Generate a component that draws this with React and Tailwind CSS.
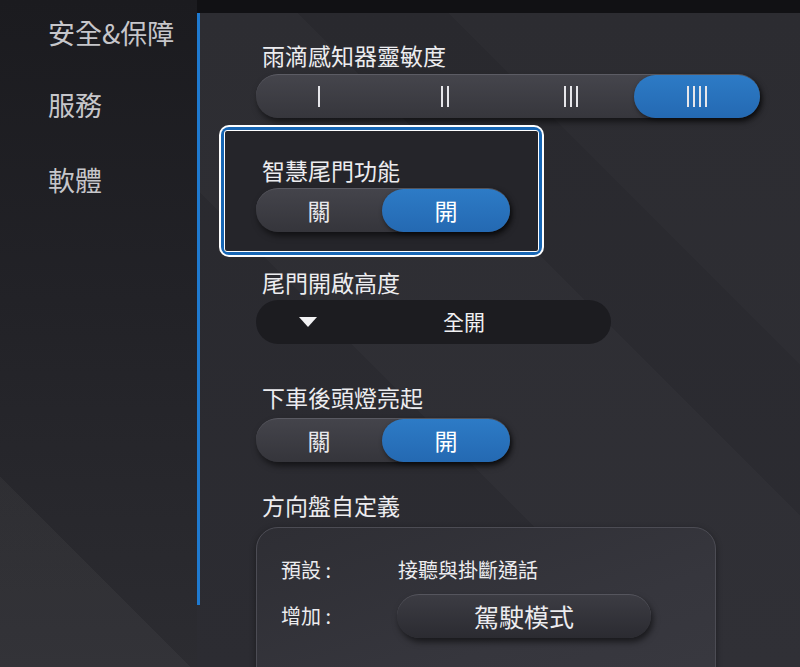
import React from "react";

const font = { fontFamily: '"Noto Sans CJK TC", "Noto Sans", sans-serif' };

function Bars({ n }) {
  return (
    <div className="flex gap-[4px] items-center">
      {Array.from({ length: n }).map((_, i) => (
        <span key={i} className="block w-[2px] h-[21px] bg-[#e6e6ea]" />
      ))}
    </div>
  );
}

function Label({ children, className = "" }) {
  return (
    <div className={"ml-[6px] h-[28px] leading-[28px] text-[23px] text-[#ececef] " + className}>
      {children}
    </div>
  );
}

function Toggle() {
  return (
    <div className="flex w-[254px] h-[44px] rounded-full bg-[linear-gradient(180deg,#44444b_0%,#35353b_100%)] border-t border-[#5a5a62] shadow-[2px_4px_6px_rgba(0,0,0,0.55)]">
      <div className="w-[126px] flex items-center justify-center text-[23px] text-[#e8e8ec]">關</div>
      <div className="flex-1 rounded-full flex items-center justify-center text-[23px] text-white bg-[linear-gradient(180deg,#2d7bc6_0%,#2469b2_100%)] shadow-[1px_2px_4px_rgba(0,0,0,0.5)]">開</div>
    </div>
  );
}

export default function App() {
  return (
    <div style={font} className="w-[800px] h-[667px] flex overflow-hidden bg-[#26262b]">
      {/* Sidebar */}
      <div className="w-[197px] h-full shrink-0 bg-[linear-gradient(45deg,rgba(255,255,255,0.035)_0%,rgba(255,255,255,0.035)_22%,transparent_22%),linear-gradient(180deg,#1b1b1f_0%,#222227_45%,#2c2c31_100%)] flex flex-col pl-[48px] pt-[16px]">
        <div className="h-[34px] leading-[34px] text-[27px] text-[#c6c6ca]">安全&amp;保障</div>
        <div className="h-[34px] leading-[34px] text-[27px] text-[#c6c6ca] mt-[38px]">服務</div>
        <div className="h-[34px] leading-[34px] text-[27px] text-[#c6c6ca] mt-[41px]">軟體</div>
      </div>

      {/* Main */}
      <div className="flex-1 h-full flex flex-col min-w-0">
        <div className="h-[13px] shrink-0 bg-[#111114]" />
        <div className="flex-1 min-h-0 flex overflow-hidden bg-[linear-gradient(45deg,transparent_0%,transparent_38%,rgba(255,255,255,0.02)_38%,rgba(255,255,255,0.02)_60%,transparent_60%,transparent_72%,rgba(255,255,255,0.015)_72%),linear-gradient(180deg,#29292e_0%,#2c2c32_100%)]">
          <div className="w-[3px] h-[592px] shrink-0 bg-[#1f7ad0]" />
          <div className="flex-1 flex flex-col pl-[56px] pt-[28px]">
            {/* Rain sensor */}
            <Label className="shrink-0">雨滴感知器靈敏度</Label>
            <div className="mt-[5px] shrink-0 flex w-[504px] h-[44px] rounded-full bg-[linear-gradient(180deg,#45454c_0%,#36363c_100%)] border-t border-[#5c5c64] shadow-[2px_4px_6px_rgba(0,0,0,0.55)]">
              <div className="w-[126px] flex items-center justify-center"><Bars n={1} /></div>
              <div className="w-[126px] flex items-center justify-center"><Bars n={2} /></div>
              <div className="w-[126px] flex items-center justify-center"><Bars n={3} /></div>
              <div className="flex-1 rounded-full flex items-center justify-center bg-[linear-gradient(180deg,#2d7bc6_0%,#2469b2_100%)] shadow-[1px_2px_4px_rgba(0,0,0,0.5)]"><Bars n={4} /></div>
            </div>

            {/* Smart tailgate (highlighted) */}
            <div className="relative mt-[38px] shrink-0">
              <div className="absolute left-[-37px] top-[-31px] w-[325px] h-[132px] rounded-[10px] bg-white p-[2px]">
                <div className="w-full h-full rounded-[8px] bg-[#1766b4] p-[3px]">
                  <div className="w-full h-full rounded-[3px] border border-white bg-[#25252a]" />
                </div>
              </div>
              <div className="relative">
                <Label>智慧尾門功能</Label>
                <div className="mt-[4px]"><Toggle /></div>
              </div>
            </div>

            {/* Tailgate height */}
            <Label className="mt-[36px] shrink-0">尾門開啟高度</Label>
            <div className="mt-[4px] shrink-0 w-[355px] h-[44px] rounded-full bg-[#1c1c20] flex items-center">
              <div className="w-[104px] flex justify-center">
                <svg width="18" height="10" viewBox="0 0 18 10"><polygon points="0,0 18,0 9,10" fill="#f2f2f4" /></svg>
              </div>
              <div className="w-[208px] text-center text-[21px] text-[#f0f0f2]">全開</div>
            </div>

            {/* Headlights */}
            <Label className="mt-[39px] shrink-0">下車後頭燈亮起</Label>
            <div className="mt-[7px] shrink-0"><Toggle /></div>

            {/* Steering wheel */}
            <Label className="mt-[29px] shrink-0">方向盤自定義</Label>
            <div className="mt-[8px] shrink-0 w-[460px] h-[180px] rounded-[22px] border border-[#4c4c54] bg-[linear-gradient(160deg,#2e2e34_0%,#36363d_60%,#393940_100%)] shadow-[0_2px_6px_rgba(0,0,0,0.4)] pl-[24px] pt-[28px]">
              <div className="flex items-center h-[28px]">
                <div className="w-[117px] text-[20px] text-[#ececef]">預設 :</div>
                <div className="text-[20px] text-[#ececef]">接聽與掛斷通話</div>
              </div>
              <div className="flex items-center mt-[10px]">
                <div className="w-[116px] text-[20px] text-[#ececef]">增加 :</div>
                <div className="w-[254px] h-[44px] rounded-full border-t border-[#55555d] bg-[linear-gradient(180deg,#3c3c43_0%,#2b2b31_100%)] shadow-[2px_4px_6px_rgba(0,0,0,0.55)] flex items-center justify-center text-[25px] text-[#ececef]">駕駛模式</div>
              </div>
            </div>
          </div>
        </div>
      </div>
    </div>
  );
}
